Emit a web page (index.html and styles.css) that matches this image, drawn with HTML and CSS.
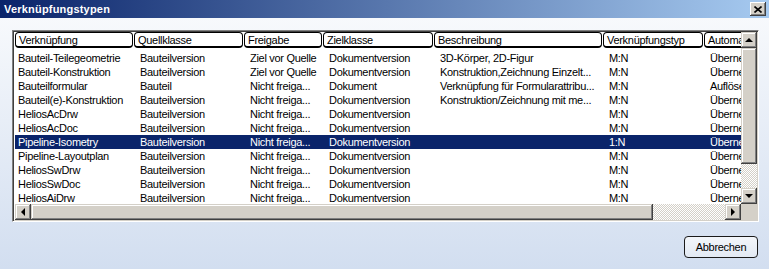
FILE: index.html
```html
<!DOCTYPE html>
<html lang="de">
<head>
    <meta charset="utf-8">
    <title>Verknüpfungstypen</title>
    <link rel="stylesheet" href="styles.css">
</head>
<body>
    <div class="window">
        <div class="titlebar">
            <span class="title">Verknüpfungstypen</span>
            <button type="button" class="close">
                <svg width="8" height="7" viewBox="0 0 8 7"><path d="M0.5 0.5 L7.5 6.5 M7.5 0.5 L0.5 6.5" stroke="#000" stroke-width="1.6" fill="none"/></svg>
            </button>
        </div>
        <div class="client">
            <div class="listview">
                <div class="viewport">
                    <div class="header">
                        <div class="hcell">Verknüpfung</div>
                        <div class="hcell">Quellklasse</div>
                        <div class="hcell">Freigabe</div>
                        <div class="hcell">Zielklasse</div>
                        <div class="hcell">Beschreibung</div>
                        <div class="hcell">Verknüpfungstyp</div>
                        <div class="hcell">Automatisch</div>
                    </div>
                    <div class="rows">
                        <div class="row"><span>Bauteil-Teilegeometrie</span><span>Bauteilversion</span><span>Ziel vor Quelle</span><span>Dokumentversion</span><span>3D-Körper, 2D-Figur</span><span>M:N</span><span>Übernehmen</span></div>
                        <div class="row"><span>Bauteil-Konstruktion</span><span>Bauteilversion</span><span>Ziel vor Quelle</span><span>Dokumentversion</span><span>Konstruktion,Zeichnung Einzelt...</span><span>M:N</span><span>Übernehmen</span></div>
                        <div class="row"><span>Bauteilformular</span><span>Bauteil</span><span>Nicht freiga...</span><span>Dokument</span><span>Verknüpfung für Formularattribu...</span><span>M:N</span><span>Auflösen</span></div>
                        <div class="row"><span>Bauteil(e)-Konstruktion</span><span>Bauteilversion</span><span>Nicht freiga...</span><span>Dokumentversion</span><span>Konstruktion/Zeichnung mit me...</span><span>M:N</span><span>Übernehmen</span></div>
                        <div class="row"><span>HeliosAcDrw</span><span>Bauteilversion</span><span>Nicht freiga...</span><span>Dokumentversion</span><span></span><span>M:N</span><span>Übernehmen</span></div>
                        <div class="row"><span>HeliosAcDoc</span><span>Bauteilversion</span><span>Nicht freiga...</span><span>Dokumentversion</span><span></span><span>M:N</span><span>Übernehmen</span></div>
                        <div class="row selected"><span>Pipeline-Isometry</span><span>Bauteilversion</span><span>Nicht freiga...</span><span>Dokumentversion</span><span></span><span>1:N</span><span>Übernehmen</span></div>
                        <div class="row"><span>Pipeline-Layoutplan</span><span>Bauteilversion</span><span>Nicht freiga...</span><span>Dokumentversion</span><span></span><span>M:N</span><span>Übernehmen</span></div>
                        <div class="row"><span>HeliosSwDrw</span><span>Bauteilversion</span><span>Nicht freiga...</span><span>Dokumentversion</span><span></span><span>M:N</span><span>Übernehmen</span></div>
                        <div class="row"><span>HeliosSwDoc</span><span>Bauteilversion</span><span>Nicht freiga...</span><span>Dokumentversion</span><span></span><span>M:N</span><span>Übernehmen</span></div>
                        <div class="row"><span>HeliosAiDrw</span><span>Bauteilversion</span><span>Nicht freiga...</span><span>Dokumentversion</span><span></span><span>M:N</span><span>Übernehmen</span></div>
                    </div>
                </div>
                <div class="vscroll">
                    <div class="sbtn"><span class="arrow up"></span></div>
                    <div class="thumb vthumb"></div>
                    <div class="track"></div>
                    <div class="sbtn"><span class="arrow down"></span></div>
                </div>
                <div class="hscroll">
                    <div class="sbtn"><span class="arrow left"></span></div>
                    <div class="thumb hthumb"></div>
                    <div class="track"></div>
                    <div class="sbtn"><span class="arrow right"></span></div>
                </div>
                <div class="corner"></div>
            </div>
            <div class="footer">
                <button type="button" class="btn">Abbrechen</button>
            </div>
        </div>
    </div>
</body>
</html>
```

FILE: styles.css
```css
body {
    margin: 0;
    font-family: "Liberation Sans", Arial, sans-serif;
    font-size: 11px;
    letter-spacing: -0.3px;
    background-color: #d2def0;
}
.window {
    width: 769px;
    height: 269px;
    display: flex;
    flex-direction: column;
}
.titlebar {
    flex: none;
    height: 18px;
    display: flex;
    align-items: center;
    justify-content: space-between;
    padding: 0 3px 0 4px;
    background: linear-gradient(to right, #0a246a, #a6caf0);
}
.title {
    color: #fff;
    font-weight: bold;
    letter-spacing: 0.2px;
}
.close {
    width: 16px;
    height: 14px;
    padding: 0;
    border: none;
    display: flex;
    align-items: center;
    justify-content: center;
    background-color: #d4d0c8;
    box-shadow: inset -1px -1px #404040, inset 1px 1px #fff, inset -2px -2px #808080;
}
.client {
    flex: 1;
    padding: 12px 10px 0 12px;
    background: linear-gradient(#f7f9fc, #d2def0);
}
.listview {
    box-sizing: border-box;
    width: 747px;
    height: 192px;
    padding: 1px 1px 1px 2px;
    border: 1px solid;
    border-color: #808080 #fff #fff #808080;
    box-shadow: inset 1px 1px #404040, inset -1px -1px #d4d0c8;
    background-color: #fff;
    display: grid;
    grid-template-columns: 726px 16px;
    grid-template-rows: 172px 16px;
}
.viewport {
    overflow: hidden;
    background-color: #fff;
}
.header, .row {
    display: grid;
    grid-template-columns: 119px 110px 79px 111px 169px 101px 100px;
}
.header {
    height: 16px;
}
.hcell {
    box-sizing: border-box;
    height: 16px;
    margin-right: 1px;
    padding: 1px 0 0 3px;
    border: 1px solid #000;
    border-bottom-width: 2px;
    border-radius: 4px;
    line-height: 12px;
    white-space: nowrap;
    overflow: hidden;
    background-color: #fff;
}
.rows {
    padding-top: 3px;
}
.row {
    height: 14px;
    line-height: 14px;
    color: #000;
}
.row span {
    padding-left: 6px;
    white-space: nowrap;
    overflow: hidden;
}
.row span:first-child {
    padding-left: 3px;
}
.row.selected {
    background-color: #0a246a;
    color: #fff;
}
.vscroll, .hscroll {
    display: flex;
    background-color: #d4d0c8;
}
.vscroll {
    flex-direction: column;
}
.sbtn, .thumb, .corner {
    flex: none;
    background-color: #d4d0c8;
}
.sbtn, .thumb {
    box-shadow: inset -1px -1px #404040, inset 1px 1px #d4d0c8, inset -2px -2px #808080, inset 2px 2px #fff;
}
.sbtn {
    width: 16px;
    height: 16px;
    display: flex;
    align-items: center;
    justify-content: center;
}
.vthumb {
    height: 116px;
}
.hthumb {
    width: 622px;
}
.track {
    flex: 1;
    background: repeating-conic-gradient(#fff 0 25%, #d4d0c8 0 50%) 0 0 / 2px 2px;
}
.arrow {
    width: 0;
    height: 0;
    border: 4px solid transparent;
}
.arrow.up {
    border-top-width: 0;
    border-bottom-color: #000;
    margin-top: -1px;
}
.arrow.down {
    border-bottom-width: 0;
    border-top-color: #000;
}
.arrow.left {
    border-left-width: 0;
    border-right-color: #000;
    margin-left: -1px;
}
.arrow.right {
    border-right-width: 0;
    border-left-color: #000;
}
.footer {
    display: flex;
    justify-content: flex-end;
    padding-top: 14px;
}
.btn {
    width: 74px;
    height: 22px;
    margin-right: 1px;
    padding: 0;
    border: 1px solid #1a1a1a;
    border-radius: 4px;
    font-family: inherit;
    font-size: 11px;
    letter-spacing: -0.3px;
    color: #000;
    background: linear-gradient(#f3f6fa, #e2e9f3);
}
```
